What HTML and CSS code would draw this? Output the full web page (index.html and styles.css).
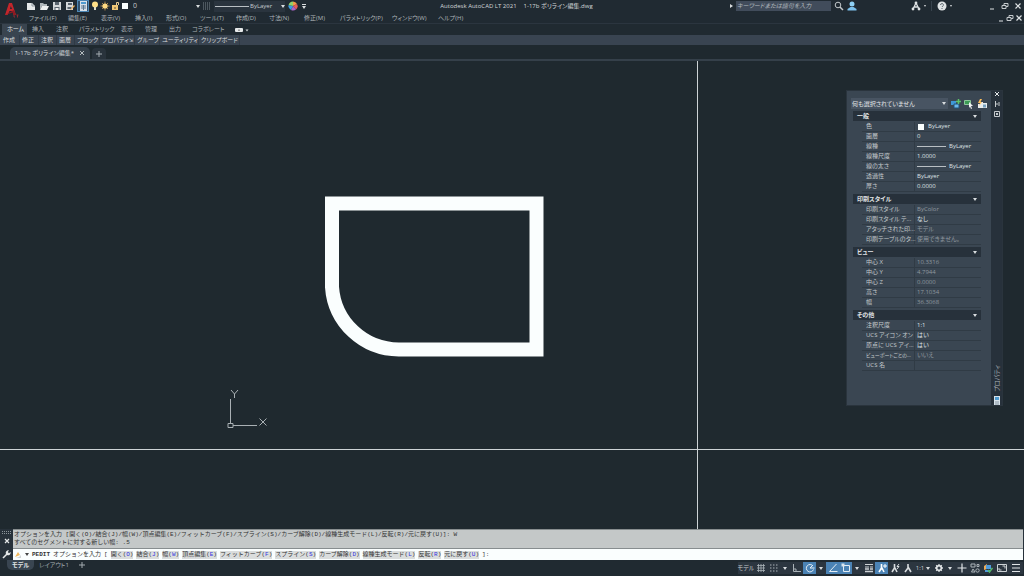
FILE: index.html
```html
<!DOCTYPE html>
<html lang="ja">
<head>
<meta charset="utf-8">
<title>Autodesk AutoCAD LT 2021</title>
<link rel="stylesheet" href="styles.css">
</head>
<body>
<div class="app">
  <header class="top">
    <div class="logo">
      <svg width="16" height="18" viewBox="0 0 16 18"><path d="M1 13 5 1h3l4 12H9.500L8.600 9H5.500L3.600 13Z" fill="#c3262b"/><path d="M6 7 6.800 4 8 7Z" fill="#222c34"/><path d="M1 13 10 8l2 5-2.500 0-.800-2.500Z" fill="#8f1a22"/><path d="M10 13v2h1M12.500 13h2M13.500 13v2.500" stroke="#8f2a30" fill="none"/></svg>
    </div>
    <div class="titlebar">
      <div class="quick">
        <button class="ib" aria-label="新規"><svg width="10" height="10" viewBox="0 0 10 10"><path d="M1 2h5l3 3v4H1Z" fill="#e6e9ea"/><path d="M6 2v3h3" stroke="#8d979e" fill="none"/></svg></button>
        <button class="ib" aria-label="開く"><svg width="10" height="10" viewBox="0 0 10 10"><path d="M1 9V2h3l1 1h3v2H3Z" fill="#aeb5b9"/><path d="M3 5h7L8 9H1Z" fill="#eef0f0"/></svg></button>
        <button class="ib" aria-label="上書き保存"><svg width="10" height="10" viewBox="0 0 10 10"><path d="M1 1h8v8H1Z" fill="#d3d7d9"/><path d="M3 1h4v3H3ZM2.500 6h5v3h-5Z" fill="#59646e"/><path d="M3.500 7h3v2h-3Z" fill="#eee"/></svg></button>
        <button class="ib" aria-label="名前を付けて保存"><svg width="10" height="10" viewBox="0 0 10 10"><path d="M1 1h7v8H1Z" fill="#d3d7d9"/><path d="M3 2h4v2H3ZM2.500 6h4v2h-4Z" fill="#59646e"/><path d="m5 9 4-5 1 1-4 4Z" fill="#f0b35a"/></svg></button>
        <button class="ib on" aria-label="プロパティ"><svg width="10" height="10" viewBox="0 0 10 10"><path d="M2 0h7v10H2Z" fill="#d8e2ea"/><path d="M3 1h5v2H3Z" fill="#4f9bd0"/><path d="M3 5h5M3 7h5M5.500 4v5" stroke="#5b7892"/></svg></button>
      </div>
      <div class="layer">
        <svg width="8" height="10" viewBox="0 0 8 10"><circle cx="4" cy="3.500" r="3" fill="#ffdf87"/><path d="M3 6h2v3H3Z" fill="#dddcc8"/></svg>
        <svg width="10" height="10" viewBox="0 0 10 10"><path d="M5 .5v9M.5 5h9M2 2l6 6M8 2 2 8" stroke="#c99a50" stroke-width=".8"/><circle cx="5" cy="5" r="2.600" fill="#ffd982"/></svg>
        <svg width="9" height="10" viewBox="0 0 9 10"><path d="M1 4h6v5H1Z" fill="#f1c876"/><path d="M5.500 4V1.500h2V4" stroke="#e8ce98" fill="none"/><path d="M4 6v2" stroke="#5b4d30"/></svg>
        <span class="chip"></span>
        <select class="pick grow" aria-label="画層"><option>0</option></select>
        <i class="tri"></i>
      </div>
      <svg class="hatch" width="8" height="8" viewBox="0 0 8 8"><path d="M0 1h8M0 3h8M0 5h8M0 7h8" stroke="#7b858c" stroke-dasharray="1 1"/></svg>
      <div class="ltype">
        <span class="rule"></span>
        <select class="pick" aria-label="線種"><option>ByLayer</option></select>
        <i class="tri"></i>
      </div>
      <button class="ib" aria-label="色"><svg width="10" height="10" viewBox="0 0 10 10"><path d="M5 5V.5A4.500 4.500 0 0 1 9 3Z" fill="#f19b45"/><path d="m5 5 4-2a4.500 4.500 0 0 1-1 5.500Z" fill="#e45a5a"/><path d="m5 5 3 3.500a4.500 4.500 0 0 1-5 .5Z" fill="#a963c7"/><path d="M5 5 3 9a4.500 4.500 0 0 1-2.400-5Z" fill="#3a9be0"/><path d="M5 5 .6 4A4.500 4.500 0 0 1 5 .5Z" fill="#8fd06a"/></svg></button>
      <button class="ib more" aria-label="カスタマイズ"><i class="bar"></i><i class="tri"></i></button>
      <div class="title"><span>Autodesk AutoCAD LT 2021</span><span>1-17b ポリライン編集.dwg</span></div>
      <div class="tools">
        <i class="tri east"></i>
        <input class="search" type="text" placeholder="キーワードまたは語句を入力" aria-label="検索">
        <button class="ib" aria-label="検索"><svg width="10" height="10" viewBox="0 0 10 10"><circle cx="4" cy="4" r="2.800" stroke="#c3c8cb" fill="none"/><path d="m6 6 3 3" stroke="#c3c8cb" stroke-width="1.500"/></svg></button>
        <button class="ib" aria-label="サインイン"><svg width="10" height="10" viewBox="0 0 10 10"><circle cx="5" cy="3" r="2.500" fill="#8fd0f5"/><path d="M.5 9.500V8l3-2h3l3 2v1.500Z" fill="#7cc0ec"/></svg></button>
      </div>
      <div class="help">
        <button class="ib" aria-label="アプリ"><svg width="10" height="10" viewBox="0 0 10 10"><path d="M5 2 2 8M5 2l3 6M3.500 6h3" stroke="#dfe3e5" stroke-width="1.300" fill="none"/><circle cx="5" cy="2" r="1.400" fill="#dfe3e5"/><circle cx="2" cy="8" r="1.400" fill="#dfe3e5"/><circle cx="8" cy="8" r="1.400" fill="#dfe3e5"/></svg></button>
        <i class="tri small"></i><i class="sep"></i>
        <button class="ib" aria-label="ヘルプ"><svg width="10" height="10" viewBox="0 0 10 10"><circle cx="5" cy="5" r="4.500" fill="#dfe3e5"/><path d="M3.600 4a1.400 1.400 0 1 1 2 1.200L5 6M5 7v1" stroke="#56616a" fill="none"/></svg></button>
        <i class="tri small"></i>
      </div>
      <div class="win">
        <button class="ib" aria-label="最小化"><svg width="8" height="8" viewBox="0 0 8 8"><path d="M2 7h4" stroke="#dfe3e5"/></svg></button>
        <button class="ib" aria-label="元に戻す"><svg width="8" height="8" viewBox="0 0 8 8"><path d="M1 3.500h4v3H1ZM3 3V1.500h4v3H5" stroke="#c5cacd" fill="none"/></svg></button>
        <button class="ib" aria-label="閉じる"><svg width="8" height="8" viewBox="0 0 8 8"><path d="m1.500 1.500 5 5M6.500 1.500l-5 5" stroke="#dfe3e5" stroke-width="1.200"/></svg></button>
      </div>
    </div>
    <nav class="menubar">
      <div class="menus">
        <button>ファイル(F)</button><button>編集(E)</button><button>表示(V)</button><button>挿入(I)</button><button>形式(O)</button><button>ツール(T)</button><button>作成(D)</button><button>寸法(N)</button><button>修正(M)</button><button>パラメトリック(P)</button><button>ウィンドウ(W)</button><button>ヘルプ(H)</button>
      </div>
      <div class="win doc">
        <button class="ib" aria-label="図面を最小化"><svg width="8" height="8" viewBox="0 0 8 8"><path d="M2 7h4" stroke="#dfe3e5"/></svg></button>
        <button class="ib" aria-label="図面を元に戻す"><svg width="8" height="8" viewBox="0 0 8 8"><path d="M1 3.500h4v3H1ZM3 3V1.500h4v3H5" stroke="#c5cacd" fill="none"/></svg></button>
        <button class="ib" aria-label="図面を閉じる"><svg width="8" height="8" viewBox="0 0 8 8"><path d="m1.500 1.500 5 5M6.500 1.500l-5 5" stroke="#dfe3e5" stroke-width="1.200"/></svg></button>
      </div>
    </nav>
  </header>

  <nav class="ribbon-tabs">
    <button class="active">ホーム</button><button>挿入</button><button>注釈</button><button>パラメトリック</button><button>表示</button><button>管理</button><button>出力</button><button>コラボレート</button>
    <button class="min" aria-label="リボンの表示"><svg width="14" height="6" viewBox="0 0 14 6"><rect x="0" y="1" width="8" height="4" rx="1" fill="#e6e9ea"/><path d="M3 3.500h2L4 2.200Z" fill="#333"/><path d="M10.500 2.500h3L12 4.500Z" fill="#c9ced1"/></svg></button>
  </nav>
  <nav class="ribbon-panels">
    <button>作成</button><button>修正</button><button>注釈</button><button>画層</button><button>ブロック</button><button>プロパティ<small>⇲</small></button><button>グループ</button><button>ユーティリティ</button><button>クリップボード</button>
  </nav>
  <div class="file-tabs">
    <button class="file-tab"><span>1-17b ポリライン編集*</span><svg width="6" height="6" viewBox="0 0 6 6"><path d="m1 1 4 4M5 1 1 5" stroke="#b5bbbf"/></svg></button>
    <button class="add" aria-label="新規図面"><svg width="6" height="6" viewBox="0 0 6 6"><path d="M3 0v6M0 3h6" stroke="#a4acb1"/></svg></button>
  </div>

  <main class="canvas">
    <svg class="drawing" width="100%" height="100%">
      <path d="M332 142.500H536.500V288.500H399A67 67 0 0 1 332 226Z" fill="none" stroke="#fafefe" stroke-width="14"/>
      <g stroke="#a9b0b4" fill="none"><path d="M230.500 338v25M233 364.500h24M228 362.500h5v4h-5Z"/><path d="m231 329 3.500 4 3.500-4M234.500 333v4M259.500 357.500l7 7M266.500 357.500l-7 7"/></g>
      <path d="M697.500 0V468" stroke="#cdd3d6"/>
      <line x1="0" y1="388.500" x2="100%" y2="388.500" stroke="#cdd3d6"/>
    </svg>
    <aside class="palette">
      <div class="palette-body">
        <div class="palette-head">
          <div class="combo"><select class="pick grow" aria-label="選択"><option>何も選択されていません</option></select><i class="tri"></i></div>
          <button class="ib" aria-label="PICKADD"><svg width="10" height="10" viewBox="0 0 10 10"><path d="M0 2h5v4H0Z" fill="#3f97d6"/><path d="M3 5h5v4H3Z" fill="#6cb8ec" stroke="#21527a"/><path d="M7.500 0v5M5 2.500h5" stroke="#5cc36a" stroke-width="1.500"/></svg></button>
          <button class="ib" aria-label="オブジェクト選択"><svg width="10" height="10" viewBox="0 0 10 10"><path d="M.5 1.500h6v4h-6Z" fill="#3b9a54" stroke="#8cc79a"/><path d="m5 3 4 4H7l1 2.500-1 .5-1-2.500L5 9Z" fill="#f2f4f4"/></svg></button>
          <button class="ib" aria-label="クイック選択"><svg width="10" height="10" viewBox="0 0 10 10"><path d="M3 3h3v6H1V5h2Z" fill="#e8ecec"/><path d="M5 4h5v5H5Z" fill="#e8ecec"/><path d="M6 5.500h3v3H6Z" fill="#78a1bf"/><path d="M3 0 1 4h2L2 7l3-4H3.500L5 0Z" fill="#ffc05c"/></svg></button>
        </div>
        <section><h2>一般<i class="tri"></i></h2>
          <dl><dt>色</dt><dd><span class="chip"></span>ByLayer</dd><dt>画層</dt><dd>0</dd><dt>線種</dt><dd><span class="rule"></span>ByLayer</dd><dt>線種尺度</dt><dd>1.0000</dd><dt>線の太さ</dt><dd><span class="rule"></span>ByLayer</dd><dt>透過性</dt><dd>ByLayer</dd><dt>厚さ</dt><dd>0.0000</dd></dl></section>
        <section><h2>印刷スタイル<i class="tri"></i></h2>
          <dl><dt>印刷スタイル</dt><dd class="off">ByColor</dd><dt>印刷スタイル テ...</dt><dd>なし</dd><dt>アタッチされた印...</dt><dd class="off">モデル</dd><dt>印刷テーブルのタ...</dt><dd class="off">使用できません。</dd></dl></section>
        <section><h2>ビュー<i class="tri"></i></h2>
          <dl><dt>中心 X</dt><dd class="off">10.3316</dd><dt>中心 Y</dt><dd class="off">4.7944</dd><dt>中心 Z</dt><dd class="off">0.0000</dd><dt>高さ</dt><dd class="off">17.1034</dd><dt>幅</dt><dd class="off">36.3068</dd></dl></section>
        <section><h2>その他<i class="tri"></i></h2>
          <dl><dt>注釈尺度</dt><dd>1:1</dd><dt>UCS アイコン オン</dt><dd>はい</dd><dt>原点に UCS アイ...</dt><dd>はい</dd><dt class="long">ビューポートごとの...</dt><dd class="off">いいえ</dd><dt>UCS 名</dt><dd></dd></dl></section>
      </div>
      <div class="palette-bar">
        <button class="ib" aria-label="閉じる"><svg width="6" height="6" viewBox="0 0 6 6"><path d="m1 1 4 4M5 1 1 5" stroke="#e6e9ea"/></svg></button>
        <button class="ib" aria-label="自動的に隠す"><svg width="6" height="6" viewBox="0 0 6 6"><path d="M1.500 0v6M2 3h2M5 1v4" stroke="#c5cacd" fill="none"/></svg></button>
        <button class="ib" aria-label="設定"><svg width="6" height="6" viewBox="0 0 6 6"><path d="M.5 .5h5v5h-5ZM2 2l2 2M4 2 2 4" stroke="#c5cacd" fill="none"/></svg></button>
        <span class="side-title">プロパティ</span>
        <svg width="8" height="9" viewBox="0 0 8 9"><path d="M1 0h6v9H1Z" fill="#d8e2ea"/><path d="M2 1h4v3H2Z" fill="#4f9bd0"/><path d="M2 6h4M2 8h4" stroke="#8796a3"/></svg>
      </div>
    </aside>
  </main>

  <section class="command">
    <div class="grip">
      <svg width="10" height="4" viewBox="0 0 10 4"><path d="M0 .5h10M0 2.500h10" stroke="#8c959b" stroke-dasharray="1 1"/></svg>
      <svg width="6" height="6" viewBox="0 0 6 6"><path d="m1 1 4 4M5 1 1 5" stroke="#e6e9ea" stroke-width="1.200"/></svg>
      <svg class="wrench" width="9" height="9" viewBox="0 0 9 9"><path d="m1 8 4-4" stroke="#e6e9ea" stroke-width="1.600"/><path d="M4 4a2.500 2.500 0 0 1 3-3.500L5.800 2l1.200 1.200L8.500 2A2.500 2.500 0 0 1 5 5Z" fill="#e6e9ea"/></svg>
    </div>
    <div class="lines">
      <div class="history"><p>オプションを入力 [開く(O)/結合(J)/幅(W)/頂点編集(E)/フィットカーブ(F)/スプライン(S)/カーブ解除(D)/線種生成モード(L)/反転(R)/元に戻す(U)]: W</p><p>すべてのセグメントに対する新しい幅: .5</p></div>
      <div class="prompt">
        <svg width="8" height="8" viewBox="0 0 8 8"><path d="M1 6 4 1l2 3Z" fill="#f1b95f"/><path d="M2 7h5V4L5 6Z" fill="#cfd4d6"/></svg>
        <i class="tri dark"></i><b>PEDIT</b><span class="ask">オプションを入力</span><span>[</span>
        <button>開く(<em>O</em>)</button><button>結合(<em>J</em>)</button><button>幅(<em>W</em>)</button><button>頂点編集(<em>E</em>)</button><button>フィットカーブ(<em>F</em>)</button><button>スプライン(<em>S</em>)</button><button>カーブ解除(<em>D</em>)</button><button>線種生成モード(<em>L</em>)</button><button>反転(<em>R</em>)</button><button>元に戻す(<em>U</em>)</button><span class="end">]:</span>
      </div>
    </div>
  </section>

  <footer class="status">
    <div class="layouts"><button class="active">モデル</button><button>レイアウト1</button><button class="plus" aria-label="新規レイアウト"><svg width="6" height="6" viewBox="0 0 6 6"><path d="M3 0v6M0 3h6" stroke="#a4acb1"/></svg></button></div>
    <div class="toggles">
      <button class="w16">モデル</button>
      <button class="w13" aria-label="グリッド"><svg width="10" height="10" viewBox="0 0 10 10"><path d="M2.500 1v8M5 1v8M7.500 1v8M1 2.500h8M1 5h8M1 7.500h8" stroke="#aab2b7" stroke-width=".8"/></svg></button>
      <button class="w13" aria-label="スナップ"><svg width="10" height="10" viewBox="0 0 10 10"><path d="M1 2h8M1 5h8M1 8h8" stroke="#aab2b7" stroke-dasharray="1.500 1.500"/></svg></button>
      <button class="w10" aria-label="スナップ設定"><i class="tri"></i></button>
      <button class="w13" aria-label="直交"><svg width="10" height="10" viewBox="0 0 10 10"><path d="M1.500 1v7.500H9M4 8V6H1.500" stroke="#aab2b7" fill="none"/></svg></button>
      <button class="w13 on" aria-label="極"><svg width="10" height="10" viewBox="0 0 10 10"><path d="M8 3a3.700 3.700 0 1 0 .5 3.500M5 5h4.500M5 5l3-3" stroke="#e4edf4" fill="none"/></svg></button>
      <button class="w10" aria-label="極設定"><i class="tri"></i></button>
      <button class="w13 on" aria-label="トラック"><svg width="10" height="10" viewBox="0 0 10 10"><path d="M8.500 1 1.500 8.500h8" stroke="#e4edf4" fill="none"/></svg></button>
      <button class="w13 on" aria-label="オブジェクトスナップ"><svg width="10" height="10" viewBox="0 0 10 10"><path d="M2.500 2.500h6v6h-6Z" stroke="#e4edf4" fill="none"/><path d="M.5 .5h3v3h-3Z" fill="#d9e5ee"/></svg></button>
      <button class="w10" aria-label="スナップ種類"><i class="tri"></i></button>
      <button class="w13" aria-label="線の太さ"><svg width="10" height="10" viewBox="0 0 10 10"><path d="M1 1.500h8M1 4h4M6 4h3" stroke="#cdd2d5"/><path d="M1 6h4M6 6h3M1 8.500h8" stroke="#cdd2d5" stroke-width="1.500"/></svg></button>
      <button class="w13 on" aria-label="注釈の可視性"><svg width="10" height="10" viewBox="0 0 10 10"><path d="M4.500 1v4L2 9M4.500 4 7 9M3.500 6h2" stroke="#fff" stroke-width="1.600" fill="none"/><path d="M8 1v4M6 3h4" stroke="#fff"/></svg></button>
      <button class="w13" aria-label="自動尺度"><svg width="10" height="10" viewBox="0 0 10 10"><path d="M4.500 1v4L2 9M4.500 4 7 9" stroke="#d9dddf" stroke-width="1.600" fill="none"/><path d="M9 1 7 3.500h2L7 6" stroke="#d9dddf" fill="none"/></svg></button>
      <button class="w13" aria-label="注釈尺度"><svg width="10" height="10" viewBox="0 0 10 10"><path d="M5 1v4L2 9M5 4l3 5" stroke="#d9dddf" stroke-width="1.600" fill="none"/></svg></button>
      <button class="w18">1:1<i class="tri"></i></button>
      <button class="w13" aria-label="ワークスペース"><svg width="10" height="10" viewBox="0 0 10 10"><path d="M5 1v8M1 5h8M2.200 2.200l5.600 5.600M7.800 2.200 2.200 7.800" stroke="#d9dddf" stroke-width="1.300"/><circle cx="5" cy="5" r="2.300" fill="#343e48" stroke="#e6e9ea" stroke-width="1.500"/></svg></button>
      <button class="w10" aria-label="ワークスペース切替"><i class="tri"></i></button>
      <button class="w13" aria-label="注釈モニター"><svg width="10" height="10" viewBox="0 0 10 10"><path d="M5 .5v9M.5 5h9" stroke="#e0e4e6" stroke-width="1.200"/></svg></button>
      <button class="w13" aria-label="選択表示"><svg width="10" height="10" viewBox="0 0 10 10"><path d="M1 1h4v3H1ZM7 1.500h2v2H7ZM3 6l2 3H1.500Z" stroke="#aab2b7" fill="none"/><circle cx="7.500" cy="7.500" r="1.700" stroke="#aab2b7" fill="none"/></svg></button>
      <button class="w14" aria-label="ハードウェア"><svg width="10" height="10" viewBox="0 0 10 10"><path d="M1 3 4 1v5L1 7Z" fill="#efac57"/><path d="M3 2h5v4H3Z" fill="#4f9bdb"/><path d="M2 7h5v2H2Z" fill="#4f9bdb"/><path d="m5 7 1.500 2L9.500 5" stroke="#56b86b" stroke-width="1.500" fill="none"/></svg></button>
      <button class="w14" aria-label="全画面"><svg width="10" height="10" viewBox="0 0 10 10"><path d="M.5 1.500h9v7h-9ZM5.500 3H8v2.500M4.500 7H2V5" stroke="#cdd2d5" fill="none"/></svg></button>
      <button class="w14" aria-label="カスタマイズ"><svg width="10" height="10" viewBox="0 0 10 10"><path d="M1 1.500h8M1 5h8M1 8.500h8" stroke="#e0e4e6" stroke-width="1.200"/></svg></button>
    </div>
  </footer>
</div>
</body>
</html>
```
FILE: styles.css
```css
* { box-sizing: border-box; }
body { margin: 0; background: #1f292f; color: #c6cbce; font: 6px/10px "Open Sans", "Noto Sans CJK JP", sans-serif; font-feature-settings: "palt"; }
button, input, select { margin: 0; padding: 0; border: 0; background: none; color: inherit; font: inherit; font-feature-settings: inherit; border-radius: 0; white-space: nowrap; }
svg { display: block; flex: none; }
.app { display: flex; flex-direction: column; height: 100vh; overflow: hidden; }
.ib { display: flex; align-items: center; justify-content: center; flex: none; }
.tri { flex: none; width: 0; height: 0; border: 2px solid transparent; border-top: 3px solid #d9dddf; border-bottom: 0; }
.tri.small { border-width: 2px 1px 0; }
.tri.east { border: 2px solid transparent; border-left: 3px solid #d9dddf; border-right: 0; }
.tri.dark { border-top-color: #444; }
.pick { appearance: none; outline: 0; }
.grow { flex: 1; min-width: 0; }
.chip { width: 6px; height: 6px; background: #fafefe; flex: none; }
.rule { height: 1px; background: #b9bfc3; flex: none; }

.top { display: grid; grid-template-columns: 25px 1fr; grid-template-rows: 12px 11px; background: #202a32; border-bottom: 1px solid #2b353f; }
.logo { grid-row: 1 / 3; padding: 2px 0 0 4px; }
.titlebar { display: flex; align-items: center; min-width: 0; padding-right: 2px; }
.quick { display: flex; gap: 1px; }
.quick .ib { width: 12px; height: 12px; }
.quick .on { background: #31506b; border: 1px solid #4c87b5; }
.layer { display: flex; align-items: center; gap: 1px; width: 109px; margin-left: 2px; }
.layer .chip { margin: 0 4px 0 1px; }
.layer .pick { font-size: 7px; }
.hatch { margin: 0 3px; }
.ltype { display: flex; align-items: center; width: 71px; height: 11px; background: #2a343e; margin-right: 3px; }
.ltype .rule { width: 34px; margin: 0 1px; }
.ltype .pick { flex: 1; min-width: 0; }
.more { flex-direction: column; gap: 1px; margin-left: 4px; }
.bar { width: 4px; height: 1px; background: #d9dddf; }
.title { flex: 1; display: flex; justify-content: center; gap: 7px; color: #d3d7d9; padding-right: 3px; white-space: nowrap; }
.tools { display: flex; align-items: center; gap: 3px; }
.search { width: 95px; height: 10px; background: #414c5b; padding: 0 1px; font-style: italic; color: #d3d7d9; }
.search::placeholder { color: #b3babf; opacity: 1; }
.help { display: flex; align-items: center; gap: 3px; margin-left: 54px; }
.sep { width: 1px; height: 10px; margin: 0 2px; background: #38434d; }
.win { display: flex; gap: 5px; margin-left: 36px; }
.menubar { display: flex; justify-content: space-between; align-items: center; color: #aeb5b9; padding-right: 1px; }
.menus { display: grid; grid-template-columns: 39px 33px 34px 31px 34px 36px 33px 35px 36px 52px 46px 30px; padding-left: 4px; }
.menus button { text-align: left; }
.doc { gap: 1px; }

.ribbon-tabs { display: grid; grid-template-columns: 25px 24px 23px 42px 24px 24px 23px 43px 22px; height: 11px; padding-left: 2px; color: #a9b0b5; background: #202a31; }
.ribbon-tabs button { padding-left: 5px; line-height: 11px; text-align: left; }
.ribbon-tabs .active { background: #39444f; color: #e2e5e7; }
.ribbon-panels { display: grid; grid-template-columns: 19px 19px 18px 18px 25px 35px 25px 39px 41px; height: 10px; padding-left: 1px; background: #394451; color: #d3d7d9; }
.ribbon-panels button { padding-left: 2px; border-right: 1px solid #303a45; text-align: left; }
.ribbon-panels small { font-size: 5px; }
.file-tabs { display: flex; align-items: flex-end; height: 16px; padding-left: 10px; border-bottom: 2px solid #35404a; }
.file-tab { display: flex; align-items: center; justify-content: center; gap: 5px; width: 80px; height: 12px; background: #35404b; border-radius: 5px 5px 0 0; color: #d3d7d9; }
.add { display: flex; align-items: center; justify-content: center; width: 14px; height: 11px; margin-left: 2px; background: #29333c; border-radius: 4px 4px 0 0; }

.canvas { position: relative; flex: 1; min-height: 0; }
.drawing { position: absolute; inset: 0; }
.palette { position: absolute; top: 29px; right: 21px; display: flex; width: 157px; height: 316px; background: #3a4652; border: 1px solid #2a343d; }
.palette-body { flex: 1; padding: 7px 10px 0 6px; min-width: 0; }
.palette-head { display: flex; align-items: center; gap: 3px; height: 11px; margin-right: -6px; margin-bottom: 2px; }
.combo { display: flex; align-items: center; flex: 1; min-width: 0; margin-left: -2px; height: 11px; padding: 0 2px 0 1px; background: #485462; color: #e2e5e7; }
.palette section { margin-bottom: 2px; }
.palette h2 { display: flex; align-items: center; justify-content: space-between; height: 10px; margin: 0 0 1px; padding: 0 4px; background: #27313b; color: #e2e5e7; font-size: 6px; font-weight: 700; }
.palette dl { display: grid; grid-template-columns: 53px 1fr; grid-auto-rows: 10px; margin: 0 0 0 9px; }
.palette dt, .palette dd { display: flex; align-items: center; margin: 0; border-bottom: 1px solid #303b45; white-space: nowrap; line-height: 9px; }
.palette dt { padding-left: 4px; border-right: 1px solid #303b45; color: #c3c9cc; }
.palette dt.long { font-size: 5px; }
.palette dd { padding-left: 2px; color: #dfe3e5; }
.palette dd.off { color: #8f989f; }
.palette .rule { width: 29px; margin-right: 3px; }
.palette dd .chip { margin: 0 4px 0 1px; }
.palette-bar { display: flex; flex-direction: column; align-items: center; gap: 4px; width: 11px; background: #27313b; }
.side-title { margin-top: auto; writing-mode: vertical-rl; text-orientation: sideways; transform: rotate(180deg); color: #aab2b7; }

.command { display: flex; background: #27313a; }
.grip { display: flex; flex-direction: column; align-items: center; gap: 3px; width: 13px; padding-top: 2px; }
.wrench { margin-top: 3px; }
.lines { flex: 1; min-width: 0; margin-right: 1px; color: #333; font-family: "Liberation Mono", "Noto Sans CJK JP", monospace; font-size: 6px; font-feature-settings: normal; }
.history { height: 19px; padding: 1px 1px 0; background: #c4c8c8; border-top: 1px solid #878d8f; }
.history p { margin: 0; line-height: 8px; white-space: nowrap; }
.prompt { display: flex; align-items: center; gap: 3px; height: 12px; padding-left: 1px; background: #fafefe; border-top: 1px solid #878d8f; white-space: nowrap; }
.prompt button { background: #dadddd; line-height: 8px; }
.prompt em { font-style: normal; color: #3535e0; }
.status { display: flex; justify-content: space-between; height: 16px; background: #202a31; }
.layouts { display: flex; height: 10px; padding-left: 7px; color: #a4acb1; }
.layouts button { padding: 0 5px; }
.layouts .active { background: #394551; color: #e2e5e7; font-weight: 700; border-radius: 0 0 5px 5px; }
.toggles { display: flex; align-items: center; padding-right: 1px; }
.toggles button { display: flex; align-items: center; justify-content: center; gap: 2px; height: 12px; background: #2c3640; }
.toggles .on { background: #4b83b5; }
.w10 { width: 10px; }
.w13 { width: 13px; }
.w14 { width: 14px; }
.w16 { width: 16px; }
.w18 { width: 18px; }
```
